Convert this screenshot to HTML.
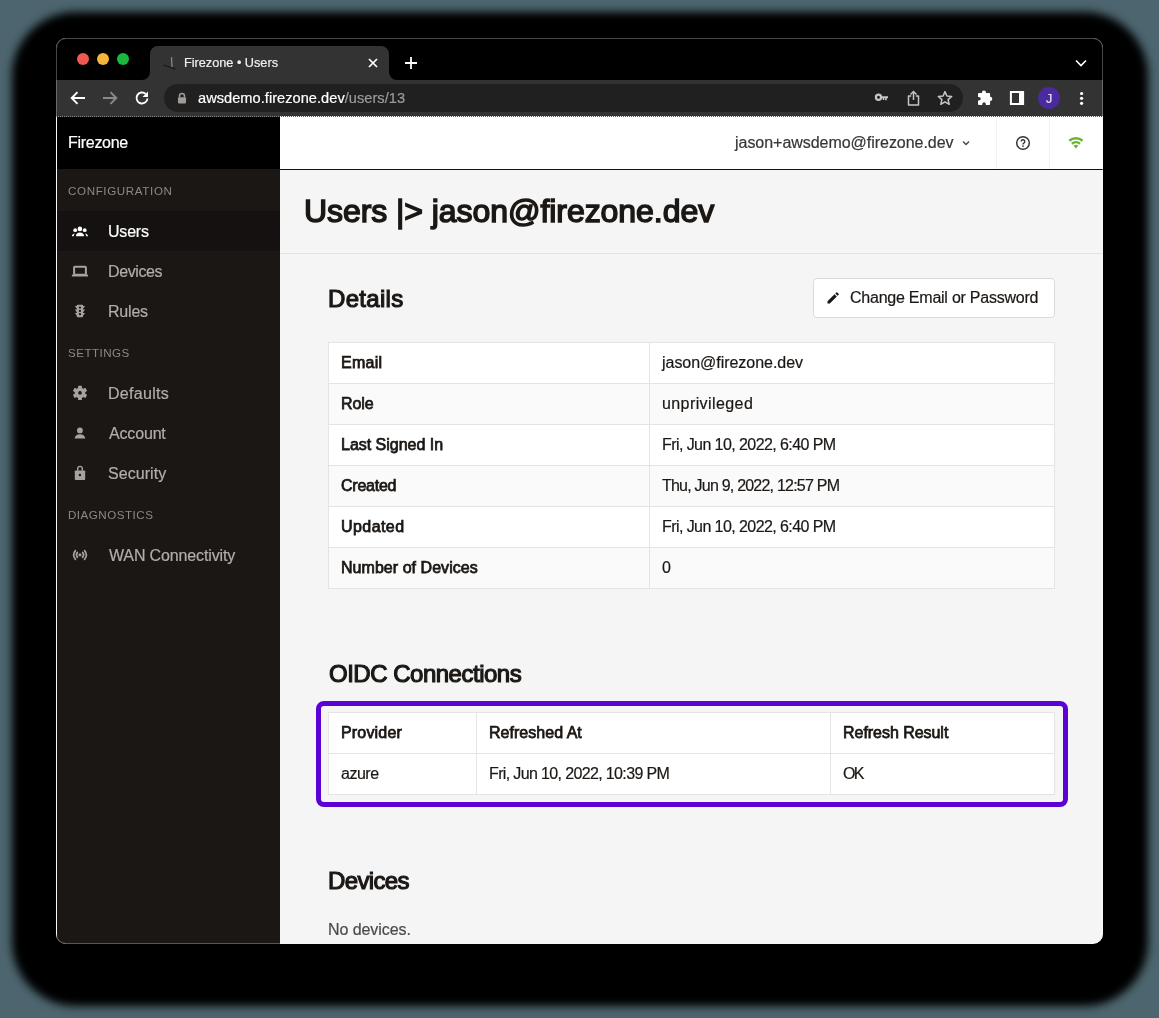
<!DOCTYPE html>
<html><head><meta charset="utf-8"><title>Firezone • Users</title>
<style>
html,body{margin:0;padding:0}
body{width:1159px;height:1018px;background:#4c656e;position:relative;overflow:hidden;font-family:"Liberation Sans", sans-serif}
.t{position:absolute;line-height:1;white-space:nowrap;will-change:transform}
#shadow{position:absolute;left:11.5px;top:12px;width:1136.5px;height:993.5px;border-radius:64px;background:#000;filter:blur(4px)}
#win{position:absolute;left:56px;top:38px;width:1047px;height:906px;border-radius:10px;overflow:hidden;background:#f5f5f5}
#winc{position:absolute;left:-56px;top:-38px;width:1159px;height:1018px}
#border{position:absolute;left:56px;top:38px;width:1047px;height:906px;border-radius:10px;box-sizing:border-box;border:1px solid rgba(255,255,255,0.27)}
</style></head><body>
<div id="shadow"></div>
<div id="win"><div id="winc">
<div style="position:absolute;left:57px;top:117px;width:223px;height:840px;background:#1b1714"></div>
<div style="position:absolute;left:57px;top:117px;width:223px;height:52px;background:#000"></div>
<div id="t0" class="t" style="left:68.20px;top:135.36px;font-size:16px;color:#ffffff;font-weight:400;letter-spacing:-0.286px;-webkit-text-stroke-width:0.2px;">Firezone</div>
<div id="t1" class="t" style="left:67.60px;top:184.98px;font-size:11.6px;color:#8e8984;font-weight:400;letter-spacing:0.625px;">CONFIGURATION</div>
<div style="position:absolute;left:57px;top:211px;width:223px;height:40px;background:#141110"></div>
<div style="position:absolute;left:68px;top:219px;width:24px;height:24px"><svg width="24" height="24" viewBox="0 0 24 24"><g fill="#fff"><circle cx="11.9" cy="9.9" r="2.3"/><circle cx="7.2" cy="11.2" r="1.9"/><circle cx="16.7" cy="11.2" r="1.9"/><path d="M7.9 17.3c0-2.4 1.8-3.7 4-3.7s4.2 1.3 4.2 3.7z"/><path d="M3.8 17.3c.3-1.3 1-2.3 2.6-2.8l.2.2c-.5.8-.8 1.6-.9 2.6z"/><path d="M20.1 17.3c-.3-1.3-1-2.3-2.6-2.8l-.2.2c.5.8.8 1.6.9 2.6z"/></g></svg></div>
<div id="t2" class="t" style="left:108.20px;top:224.26px;font-size:16px;color:#ffffff;font-weight:400;letter-spacing:-0.200px;-webkit-text-stroke-width:0.2px;">Users</div>
<div style="position:absolute;left:68px;top:259px;width:24px;height:24px"><svg width="24" height="24" viewBox="0 0 24 24"><rect x="6.1" y="7.8" width="11.8" height="8" rx="0.8" fill="none" stroke="#a8a29d" stroke-width="2"/><rect x="3.9" y="15.6" width="16.1" height="1.9" fill="#a8a29d"/></svg></div>
<div id="t3" class="t" style="left:108.20px;top:264.26px;font-size:16px;color:#b3ada8;font-weight:400;letter-spacing:-0.400px;-webkit-text-stroke-width:0.2px;">Devices</div>
<div style="position:absolute;left:68px;top:299px;width:24px;height:24px"><svg width="24" height="24" viewBox="0 0 24 24"><g fill="#a8a29d"><rect x="8.8" y="5.7" width="6.3" height="12.5" rx="0.8"/><path d="M6.8 7.1h2.2v2.6z M17.1 7.1h-2.2v2.6z M6.8 10.6h2.2v2.6z M17.1 10.6h-2.2v2.6z M6.8 14.1h2.2v2.6z M17.1 14.1h-2.2v2.6z"/></g><g fill="#1b1714"><circle cx="11.95" cy="8.6" r="1.15"/><circle cx="11.95" cy="11.9" r="1.15"/><circle cx="11.95" cy="15.2" r="1.15"/></g></svg></div>
<div id="t4" class="t" style="left:108.20px;top:304.26px;font-size:16px;color:#b3ada8;font-weight:400;letter-spacing:-0.200px;-webkit-text-stroke-width:0.2px;">Rules</div>
<div id="t5" class="t" style="left:67.60px;top:347.08px;font-size:11.6px;color:#8e8984;font-weight:400;letter-spacing:0.457px;">SETTINGS</div>
<div style="position:absolute;left:68px;top:381px;width:24px;height:24px"><svg width="24" height="24" viewBox="0 0 24 24"><g fill="#a8a29d"><circle cx="12" cy="11.9" r="5.3"/><rect x="10.1" y="4.7" width="3.8" height="4" rx="0.6" transform="rotate(0 12 11.9)"/><rect x="10.1" y="4.7" width="3.8" height="4" rx="0.6" transform="rotate(-60 12 11.9)"/><rect x="10.1" y="4.7" width="3.8" height="4" rx="0.6" transform="rotate(60 12 11.9)"/><rect x="10.1" y="4.7" width="3.8" height="4" rx="0.6" transform="rotate(120 12 11.9)"/><rect x="10.1" y="4.7" width="3.8" height="4" rx="0.6" transform="rotate(180 12 11.9)"/><rect x="10.1" y="4.7" width="3.8" height="4" rx="0.6" transform="rotate(240 12 11.9)"/></g><circle cx="12" cy="11.9" r="1.8" fill="#1b1714"/></svg></div>
<div id="t6" class="t" style="left:108.20px;top:386.26px;font-size:16px;color:#b3ada8;font-weight:400;letter-spacing:0.286px;-webkit-text-stroke-width:0.2px;">Defaults</div>
<div style="position:absolute;left:68px;top:421px;width:24px;height:24px"><svg width="24" height="24" viewBox="0 0 24 24"><g fill="#a8a29d"><circle cx="11.9" cy="9.4" r="2.9"/><path d="M6.6 17.5c.3-2.8 2.5-4.3 5.3-4.3s5.1 1.5 5.4 4.3z"/></g></svg></div>
<div id="t7" class="t" style="left:109.20px;top:426.26px;font-size:16px;color:#b3ada8;font-weight:400;letter-spacing:-0.167px;-webkit-text-stroke-width:0.2px;">Account</div>
<div style="position:absolute;left:68px;top:461px;width:24px;height:24px"><svg width="24" height="24" viewBox="0 0 24 24"><path d="M9.7 9.8V7.7a2.3 2.3 0 0 1 4.6 0v2.1" fill="none" stroke="#a8a29d" stroke-width="1.4"/><rect x="6.8" y="9.4" width="10.4" height="9.5" rx="0.9" fill="#a8a29d"/><circle cx="11.9" cy="14" r="1.2" fill="#1b1714"/></svg></div>
<div id="t8" class="t" style="left:108.20px;top:466.26px;font-size:16px;color:#b3ada8;font-weight:400;letter-spacing:0.057px;-webkit-text-stroke-width:0.2px;">Security</div>
<div id="t9" class="t" style="left:67.60px;top:508.88px;font-size:11.6px;color:#8e8984;font-weight:400;letter-spacing:0.500px;">DIAGNOSTICS</div>
<div style="position:absolute;left:68px;top:543px;width:24px;height:24px"><svg width="24" height="24" viewBox="0 0 24 24"><g fill="none" stroke="#a8a29d" stroke-width="1.7" stroke-linecap="round"><path d="M9.4 9.4a4 4 0 0 0 0 5"/><path d="M14.6 9.4a4 4 0 0 1 0 5"/><path d="M7.4 7.6a7 7 0 0 0 0 8.8"/><path d="M16.6 7.6a7 7 0 0 1 0 8.8"/></g><rect x="10.6" y="10.6" width="2.7" height="2.7" rx="0.6" fill="#a8a29d"/></svg></div>
<div id="t10" class="t" style="left:109.20px;top:548.26px;font-size:16px;color:#b3ada8;font-weight:400;letter-spacing:-0.140px;-webkit-text-stroke-width:0.2px;">WAN Connectivity</div>

<div style="position:absolute;left:280px;top:117px;width:823px;height:52px;background:#fff"></div>
<div style="position:absolute;left:280px;top:169px;width:823px;height:1px;background:#111"></div>
<div id="t11" class="t" style="left:735.40px;top:135.36px;font-size:16px;color:#363636;font-weight:400;letter-spacing:-0.036px;-webkit-text-stroke-width:0.2px;">jason+awsdemo@firezone.dev</div>
<svg style="position:absolute;left:960px;top:137px" width="12" height="12" viewBox="0 0 12 12"><path d="M3 4.5l3 3 3-3" fill="none" stroke="#4a4a4a" stroke-width="1.5"/></svg>
<div style="position:absolute;left:996px;top:117px;width:1px;height:52px;background:#f2f2f2"></div>
<div style="position:absolute;left:1049px;top:117px;width:1px;height:52px;background:#f2f2f2"></div>
<svg style="position:absolute;left:1013px;top:133px" width="20" height="20" viewBox="0 0 20 20"><circle cx="10" cy="10" r="6.3" fill="none" stroke="#363636" stroke-width="1.5"/><path d="M8.2 8.6a1.8 1.8 0 1 1 2.6 1.6c-.6.3-.8.7-.8 1.3" fill="none" stroke="#363636" stroke-width="1.4"/><circle cx="10" cy="13.1" r=".85" fill="#363636"/></svg>
<svg style="position:absolute;left:1066px;top:133px" width="20" height="20" viewBox="0 0 20 20"><g fill="none" stroke="#6db32f" stroke-width="2.5"><path d="M3.28 7.71A10.3 10.3 0 0 1 16.52 7.71"/><path d="M5.85 10.77A6.3 6.3 0 0 1 13.95 10.77"/></g><path d="M9.9 15.6L7.52 12.77A3.7 3.7 0 0 1 12.28 12.77z" fill="#6db32f"/></svg>

<div id="t12" class="t" style="left:304.00px;top:195.31px;font-size:32px;color:#1b1714;font-weight:400;letter-spacing:-0.058px;-webkit-text-stroke-width:1.5px;">Users |&gt; jason@firezone.dev</div>
<div style="position:absolute;left:280px;top:253px;width:823px;height:1px;background:#e3e3e3"></div>
<div id="t13" class="t" style="left:328.20px;top:286.58px;font-size:24px;color:#1b1714;font-weight:400;letter-spacing:0.300px;-webkit-text-stroke-width:1.15px;">Details</div>
<div style="position:absolute;left:813px;top:278px;width:242px;height:40px;box-sizing:border-box;background:#fff;border:1px solid #dbdbdb;border-radius:4px"></div>
<svg style="position:absolute;left:825px;top:290px" width="16" height="16" viewBox="0 0 16 16"><path d="M2.5 11.2v2.3h2.3l7-7-2.3-2.3z M12.6 5.7l1-1a.6.6 0 0 0 0-.9l-1.4-1.4a.6.6 0 0 0-.9 0l-1 1z" fill="#1b1714"/></svg>
<div id="t14" class="t" style="left:849.60px;top:290.06px;font-size:16px;color:#1b1714;font-weight:400;letter-spacing:-0.235px;-webkit-text-stroke-width:0.2px;">Change Email or Password</div>
<div style="position:absolute;left:328px;top:342px;width:727px;height:247px;background:#e4e4e4"></div>
<div style="position:absolute;left:329px;top:343px;width:320px;height:40px;background:#ffffff"></div>
<div id="t15" class="t" style="left:340.60px;top:355.06px;font-size:16px;color:#1b1714;font-weight:400;letter-spacing:0.250px;-webkit-text-stroke-width:0.75px;">Email</div>
<div style="position:absolute;left:650px;top:343px;width:404px;height:40px;background:#ffffff"></div>
<div id="t16" class="t" style="left:661.60px;top:355.06px;font-size:16px;color:#1b1714;font-weight:400;letter-spacing:-0.035px;-webkit-text-stroke-width:0.2px;">jason@firezone.dev</div>
<div style="position:absolute;left:329px;top:384px;width:320px;height:40px;background:#fafafa"></div>
<div id="t17" class="t" style="left:340.60px;top:396.06px;font-size:16px;color:#1b1714;font-weight:400;letter-spacing:-0.067px;-webkit-text-stroke-width:0.75px;">Role</div>
<div style="position:absolute;left:650px;top:384px;width:404px;height:40px;background:#fafafa"></div>
<div id="t18" class="t" style="left:661.60px;top:396.06px;font-size:16px;color:#1b1714;font-weight:400;letter-spacing:0.409px;-webkit-text-stroke-width:0.2px;">unprivileged</div>
<div style="position:absolute;left:329px;top:425px;width:320px;height:40px;background:#ffffff"></div>
<div id="t19" class="t" style="left:340.60px;top:437.06px;font-size:16px;color:#1b1714;font-weight:400;letter-spacing:-0.015px;-webkit-text-stroke-width:0.75px;">Last Signed In</div>
<div style="position:absolute;left:650px;top:425px;width:404px;height:40px;background:#ffffff"></div>
<div id="t20" class="t" style="left:661.60px;top:437.06px;font-size:16px;color:#1b1714;font-weight:400;letter-spacing:-0.576px;-webkit-text-stroke-width:0.2px;">Fri, Jun 10, 2022, 6:40 PM</div>
<div style="position:absolute;left:329px;top:466px;width:320px;height:40px;background:#fafafa"></div>
<div id="t21" class="t" style="left:340.60px;top:478.06px;font-size:16px;color:#1b1714;font-weight:400;letter-spacing:-0.250px;-webkit-text-stroke-width:0.75px;">Created</div>
<div style="position:absolute;left:650px;top:466px;width:404px;height:40px;background:#fafafa"></div>
<div id="t22" class="t" style="left:661.60px;top:478.06px;font-size:16px;color:#1b1714;font-weight:400;letter-spacing:-0.780px;-webkit-text-stroke-width:0.2px;">Thu, Jun 9, 2022, 12:57 PM</div>
<div style="position:absolute;left:329px;top:507px;width:320px;height:40px;background:#ffffff"></div>
<div id="t23" class="t" style="left:340.60px;top:519.06px;font-size:16px;color:#1b1714;font-weight:400;letter-spacing:0.433px;-webkit-text-stroke-width:0.75px;">Updated</div>
<div style="position:absolute;left:650px;top:507px;width:404px;height:40px;background:#ffffff"></div>
<div id="t24" class="t" style="left:661.60px;top:519.06px;font-size:16px;color:#1b1714;font-weight:400;letter-spacing:-0.576px;-webkit-text-stroke-width:0.2px;">Fri, Jun 10, 2022, 6:40 PM</div>
<div style="position:absolute;left:329px;top:548px;width:320px;height:40px;background:#fafafa"></div>
<div id="t25" class="t" style="left:340.60px;top:560.06px;font-size:16px;color:#1b1714;font-weight:400;letter-spacing:0.044px;-webkit-text-stroke-width:0.75px;">Number of Devices</div>
<div style="position:absolute;left:650px;top:548px;width:404px;height:40px;background:#fafafa"></div>
<div id="t26" class="t" style="left:661.60px;top:560.06px;font-size:16px;color:#1b1714;font-weight:400;letter-spacing:0.000px;-webkit-text-stroke-width:0.2px;">0</div>
<div id="t27" class="t" style="left:328.60px;top:662.28px;font-size:24px;color:#1b1714;font-weight:400;letter-spacing:-0.493px;-webkit-text-stroke-width:1.15px;">OIDC Connections</div>
<div style="position:absolute;left:316px;top:701px;width:752px;height:106px;box-sizing:border-box;border:5px solid #5c02d6;border-radius:8px"></div>
<div style="position:absolute;left:328px;top:712px;width:727px;height:83px;background:#e4e4e4"></div>
<div style="position:absolute;left:329px;top:713px;width:147px;height:40px;background:#ffffff"></div>
<div id="t28" class="t" style="left:340.60px;top:725.06px;font-size:16px;color:#1b1714;font-weight:400;letter-spacing:0.171px;-webkit-text-stroke-width:0.75px;">Provider</div>
<div style="position:absolute;left:477px;top:713px;width:353px;height:40px;background:#ffffff"></div>
<div id="t29" class="t" style="left:488.60px;top:725.06px;font-size:16px;color:#1b1714;font-weight:400;letter-spacing:0.027px;-webkit-text-stroke-width:0.75px;">Refreshed At</div>
<div style="position:absolute;left:831px;top:713px;width:223px;height:40px;background:#ffffff"></div>
<div id="t30" class="t" style="left:842.60px;top:725.06px;font-size:16px;color:#1b1714;font-weight:400;letter-spacing:-0.038px;-webkit-text-stroke-width:0.75px;">Refresh Result</div>
<div style="position:absolute;left:329px;top:754px;width:147px;height:40px;background:#ffffff"></div>
<div id="t31" class="t" style="left:340.60px;top:766.06px;font-size:16px;color:#1b1714;font-weight:400;letter-spacing:-0.500px;-webkit-text-stroke-width:0.2px;">azure</div>
<div style="position:absolute;left:477px;top:754px;width:353px;height:40px;background:#ffffff"></div>
<div id="t32" class="t" style="left:488.60px;top:766.06px;font-size:16px;color:#1b1714;font-weight:400;letter-spacing:-0.638px;-webkit-text-stroke-width:0.2px;">Fri, Jun 10, 2022, 10:39 PM</div>
<div style="position:absolute;left:831px;top:754px;width:223px;height:40px;background:#ffffff"></div>
<div id="t33" class="t" style="left:842.60px;top:766.06px;font-size:16px;color:#1b1714;font-weight:400;letter-spacing:-1.600px;-webkit-text-stroke-width:0.2px;">OK</div>
<div id="t34" class="t" style="left:328.20px;top:868.88px;font-size:24px;color:#1b1714;font-weight:400;letter-spacing:-0.650px;-webkit-text-stroke-width:1.15px;">Devices</div>
<div id="t35" class="t" style="left:327.60px;top:922.26px;font-size:16px;color:#4a4a4a;font-weight:400;letter-spacing:-0.070px;-webkit-text-stroke-width:0.2px;">No devices.</div>

<div style="position:absolute;left:56px;top:38px;width:1047px;height:42px;background:#000"></div>
<div style="position:absolute;left:77px;top:53px;width:12px;height:12px;border-radius:6px;background:#ee5a52"></div>
<div style="position:absolute;left:97px;top:53px;width:12px;height:12px;border-radius:6px;background:#f5b53a"></div>
<div style="position:absolute;left:117px;top:53px;width:12px;height:12px;border-radius:6px;background:#18b83f"></div>
<svg style="position:absolute;left:142px;top:46px" width="260" height="34" viewBox="0 0 260 34"><path d="M0 34 a8 8 0 0 0 8 -8 V8 a8 8 0 0 1 8 -8 H239 a8 8 0 0 1 8 8 V26 a8 8 0 0 0 8 8 z" fill="#333333"/></svg>
<svg style="position:absolute;left:162px;top:54px" width="18" height="18" viewBox="0 0 18 18"><path d="M9.5 3 L10 13" stroke="#8a8580" stroke-width="1.3"/><path d="M1.5 11 L13.5 15" stroke="#1a1512" stroke-width="1.3"/></svg>
<div id="t36" class="t" style="left:184.00px;top:57.35px;font-size:12.7px;color:#f0f0f0;font-weight:400;letter-spacing:0.000px;-webkit-text-stroke-width:0.2px;">Firezone • Users</div>
<svg style="position:absolute;left:366px;top:56px" width="14" height="14" viewBox="0 0 14 14"><path d="M3 3l8 8M11 3l-8 8" stroke="#fff" stroke-width="1.7"/></svg>
<svg style="position:absolute;left:403px;top:55px" width="16" height="16" viewBox="0 0 16 16"><path d="M8 2v12M2 8h12" stroke="#fff" stroke-width="1.8"/></svg>
<svg style="position:absolute;left:1074px;top:56px" width="14" height="14" viewBox="0 0 14 14"><path d="M2 4.5l5 5 5-5" fill="none" stroke="#fff" stroke-width="1.6"/></svg>
<div style="position:absolute;left:56px;top:80px;width:1047px;height:36px;background:#333333"></div>
<div style="position:absolute;left:56px;top:116px;width:224px;height:1px;background:repeating-linear-gradient(90deg,#8f8882 0 1px,#2a2725 1px 2px)"></div>
<div style="position:absolute;left:280px;top:116px;width:823px;height:1px;background:repeating-linear-gradient(90deg,#f0f0f0 0 1px,#5a5654 1px 2px)"></div>
<svg style="position:absolute;left:68px;top:88px" width="20" height="20" viewBox="0 0 20 20"><path d="M17 10H4M9.5 4.2L3.7 10l5.8 5.8" fill="none" stroke="#fff" stroke-width="1.9"/></svg>
<svg style="position:absolute;left:100px;top:88px" width="20" height="20" viewBox="0 0 20 20"><path d="M3 10h13M10.5 4.2l5.8 5.8-5.8 5.8" fill="none" stroke="#8a8a8a" stroke-width="1.9"/></svg>
<svg style="position:absolute;left:132px;top:88px" width="20" height="20" viewBox="0 0 20 20"><path d="M15.5 10.5a5.5 5.5 0 1 1-1.8-4.6" fill="none" stroke="#fff" stroke-width="1.9"/><path d="M16 3.5v5.5h-5.5z" fill="#fff"/></svg>
<div style="position:absolute;left:164px;top:84px;width:799px;height:28px;border-radius:14px;background:#202020"></div>
<svg style="position:absolute;left:175px;top:91px" width="14" height="14" viewBox="0 0 14 14"><path d="M4.5 6.5V5a2.5 2.5 0 0 1 5 0v1.5" fill="none" stroke="#a09b97" stroke-width="1.5"/><rect x="3" y="6.2" width="8" height="6.3" rx="1" fill="#a09b97"/></svg>
<div id="t37" class="t" style="left:198.40px;top:90.74px;font-size:14.6px;color:#fff;font-weight:400;letter-spacing:0.036px;-webkit-text-stroke-width:0.2px;"><span style="color:#fff">awsdemo.firezone.dev</span><span style="color:#9b9b9b">/users/13</span></div>
<svg style="position:absolute;left:871px;top:88px" width="20" height="20" viewBox="0 0 20 20"><circle cx="7.5" cy="9.3" r="2.6" fill="none" stroke="#c8c4c0" stroke-width="2.2"/><path d="M10 8.3h7v2h-1.3v2h-1.6v-2h-0.8v1.6h-1.6v-1.6H10z" fill="#c8c4c0"/></svg>
<svg style="position:absolute;left:903px;top:88px" width="20" height="20" viewBox="0 0 20 20"><path d="M8.2 8H5.5v9h10V8h-2.7" fill="none" stroke="#c8c4c0" stroke-width="1.5" stroke-linejoin="round"/><path d="M10.5 12V4" stroke="#c8c4c0" stroke-width="1.5"/><path d="M7.5 6.5l3-3 3 3" fill="none" stroke="#c8c4c0" stroke-width="1.5"/></svg>
<svg style="position:absolute;left:935px;top:88px" width="20" height="20" viewBox="0 0 20 20"><path d="M10 3.6l1.9 4.4 4.8.4-3.6 3.2 1.1 4.7L10 13.8l-4.2 2.5 1.1-4.7-3.6-3.2 4.8-.4z" fill="none" stroke="#c8c4c0" stroke-width="1.5" stroke-linejoin="round"/></svg>
<svg style="position:absolute;left:975px;top:88px" width="20" height="20" viewBox="0 0 20 20"><path d="M3 5.9a1 1 0 0 1 1-1H6.9V4.6a2.05 2.05 0 0 1 4.1 0V4.9H14.1a1 1 0 0 1 1 1V8.8h.1a2.1 2.1 0 0 1 0 4.2H15.1V16.1a1 1 0 0 1-1 1H10.8V15.9a1.75 1.75 0 0 0-3.5 0V17.1H4a1 1 0 0 1-1-1V12.6h.9a1.8 1.8 0 0 0 0-3.6H3z" fill="#fff"/></svg>
<svg style="position:absolute;left:1007px;top:88px" width="20" height="20" viewBox="0 0 20 20"><rect x="3.9" y="4" width="12.2" height="12" fill="none" stroke="#fff" stroke-width="2"/><rect x="12" y="3" width="5" height="14" fill="#fff"/></svg>
<div style="position:absolute;left:1038px;top:87px;width:22px;height:22px;border-radius:11px;background:#4a2a9e"></div>
<div id="t38" class="t" style="left:1046.00px;top:93.32px;font-size:12.5px;color:#e6e2ee;font-weight:400;letter-spacing:0.000px;-webkit-text-stroke-width:0.2px;">J</div>
<svg style="position:absolute;left:1071px;top:88px" width="20" height="20" viewBox="0 0 20 20"><g fill="#fff"><circle cx="10.6" cy="5.5" r="1.6"/><circle cx="10.6" cy="10.3" r="1.6"/><circle cx="10.6" cy="15.3" r="1.6"/></g></svg>

</div></div>
<div id="border"></div>
</body></html>
